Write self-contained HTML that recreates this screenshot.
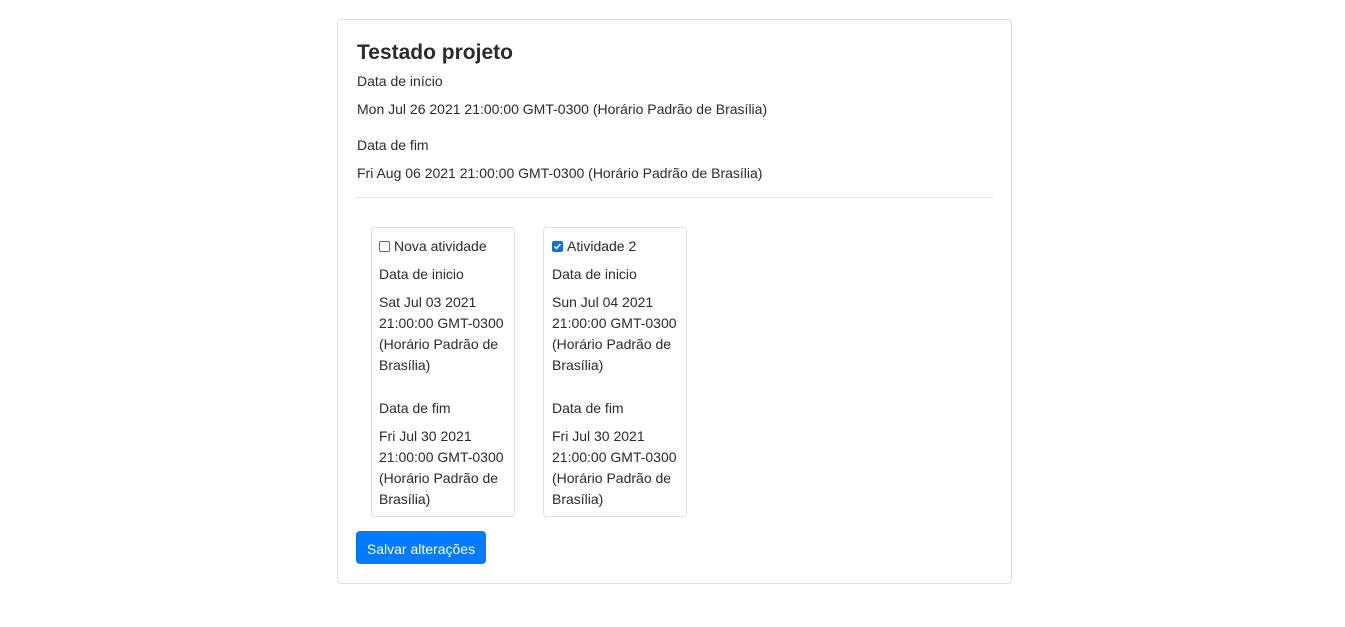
<!DOCTYPE html>
<html><head><meta charset="utf-8"><style>
body{margin:0;background:#fff;font-family:"Liberation Sans",sans-serif;color:#2b2b2b;font-size:14px;}
.a{position:absolute;white-space:nowrap;line-height:21px;}
.card{position:absolute;border:1px solid #dfdfdf;border-radius:4px;box-sizing:border-box;}
.cb{display:inline-block;width:9px;height:9px;border:1px solid #666;border-radius:2px;vertical-align:-1px;margin-right:4px;}
.cbc{display:inline-block;width:11px;height:11px;background:#0b6fe8;border-radius:2px;vertical-align:-1px;margin-right:4px;position:relative;}
</style></head><body>
<div class="card" style="left:337px;top:19px;width:675px;height:565px;"></div>
<div class="a" style="left:357px;top:40px;font-size:21px;line-height:26px;font-weight:bold;">Testado projeto</div>
<div class="a" style="left:357px;top:71px;">Data de início</div>
<div class="a" style="left:357px;top:99px;">Mon Jul 26 2021 21:00:00 GMT-0300 (Horário Padrão de Brasília)</div>
<div class="a" style="left:357px;top:135px;">Data de fim</div>
<div class="a" style="left:357px;top:163px;">Fri Aug 06 2021 21:00:00 GMT-0300 (Horário Padrão de Brasília)</div>
<div style="position:absolute;left:356px;top:197px;width:637px;height:1px;background:#e5e5e5;"></div>

<div class="card" style="left:371px;top:227px;width:144px;height:290px;"></div>
<div class="a" style="left:379px;top:236px;"><span class="cb"></span>Nova atividade</div>
<div class="a" style="left:379px;top:264px;">Data de inicio</div>
<div class="a" style="left:379px;top:292px;">Sat Jul 03 2021<br>21:00:00 GMT-0300<br>(Horário Padrão de<br>Brasília)</div>
<div class="a" style="left:379px;top:398px;">Data de fim</div>
<div class="a" style="left:379px;top:426px;">Fri Jul 30 2021<br>21:00:00 GMT-0300<br>(Horário Padrão de<br>Brasília)</div>

<div class="card" style="left:543px;top:227px;width:144px;height:290px;"></div>
<div class="a" style="left:552px;top:236px;"><span class="cbc"><svg width="11" height="11" style="position:absolute;left:0;top:0"><path d="M2.5 5.5l2 2 4-4.5" stroke="#fff" stroke-width="1.6" fill="none"/></svg></span>Atividade 2</div>
<div class="a" style="left:552px;top:264px;">Data de inicio</div>
<div class="a" style="left:552px;top:292px;">Sun Jul 04 2021<br>21:00:00 GMT-0300<br>(Horário Padrão de<br>Brasília)</div>
<div class="a" style="left:552px;top:398px;">Data de fim</div>
<div class="a" style="left:552px;top:426px;">Fri Jul 30 2021<br>21:00:00 GMT-0300<br>(Horário Padrão de<br>Brasília)</div>

<div style="position:absolute;left:356px;top:531px;width:130px;height:33px;background:#007bff;border-radius:4px;color:#fff;text-align:center;line-height:36px;font-size:14px;">Salvar alterações</div>
</body></html>
